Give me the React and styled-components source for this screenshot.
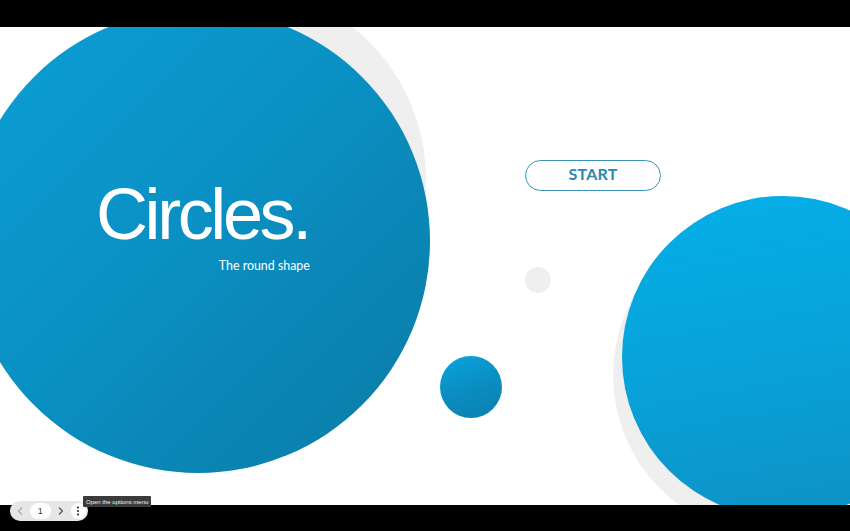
import styled, { createGlobalStyle } from "styled-components";

const GlobalStyle = createGlobalStyle`
    html, body {
        margin: 0;
        padding: 0;
        background: #000;
    }
    * {
        box-sizing: border-box;
    }
`;

const Stage = styled.div`
    width: 850px;
    height: 531px;
    display: flex;
    align-items: center;
    justify-content: center;
    background: #000;
    position: relative;
    overflow: hidden;
`;

const Slide = styled.div`
    position: relative;
    width: 850px;
    height: 478px;
    background: #fff;
    overflow: hidden;
`;

// shapes sit on the slide canvas, so their place is the content
const Circle = styled.div`
    position: absolute;
    left: ${({x, r}) => x - r}px;
    top: ${({y, r}) => y - r}px;
    width: ${({r}) => r * 2}px;
    height: ${({r}) => r * 2}px;
    border-radius: 50%;
    background: ${({fill}) => fill};
`;

const TitleBlock = styled.div`
    position: absolute;
    left: 96px;
    top: 151px;
    display: flex;
    flex-direction: column;
    align-items: flex-end;
    color: #fff;
`;

const Title = styled.h1`
    margin: 0;
    font-family: "Liberation Sans", Arial, sans-serif;
    font-weight: 400;
    font-size: 72px;
    line-height: 72px;
    letter-spacing: -3.4px;
`;

const Subtitle = styled.p`
    margin: 8px -1px 0 0;
    font-family: Lato, "Open Sans", sans-serif;
    font-size: 12.4px;
    line-height: 16px;
`;

const StartButton = styled.button`
    position: absolute;
    left: 525px;
    top: 133px;
    width: 136px;
    height: 31px;
    border: 1px solid #3b93b9;
    border-radius: 16px;
    background: #fff;
    color: #2a87ad;
    font-family: Lato, "Open Sans", sans-serif;
    font-weight: 700;
    font-size: 16px;
    line-height: 16px;
    letter-spacing: 0.2px;
    padding: 0 0 2px;
    cursor: pointer;
`;

const Player = styled.div`
    position: absolute;
    left: 10px;
    top: 496px;
    display: flex;
    align-items: flex-start;
`;

const Controls = styled.div`
    margin-top: 5px;
    height: 20px;
    width: 78px;
    padding: 0 2px 0 4px;
    display: flex;
    align-items: center;
    gap: 4px;
    border-radius: 10px;
    background: #e6e6e6;
`;

const NavArrow = styled.span`
    width: 12px;
    display: flex;
    align-items: center;
    justify-content: center;
    color: ${({dim}) => dim ? '#a8a8a8' : '#555'};
`;

const PageNumber = styled.span`
    width: 22px;
    height: 16px;
    border-radius: 8px;
    background: #fff;
    display: flex;
    align-items: center;
    justify-content: center;
    font-family: "Liberation Sans", Arial, sans-serif;
    font-size: 9px;
    color: #333;
`;

const MenuButton = styled.span`
    width: 16px;
    height: 16px;
    border-radius: 50%;
    background: #fff;
    display: flex;
    align-items: center;
    justify-content: center;
    margin-left: auto;
`;

const Tooltip = styled.div`
    margin-left: -5px;
    height: 11px;
    padding: 0 3px;
    display: flex;
    align-items: center;
    background: #3b3b3b;
    color: #f2f2f2;
    font-family: "Liberation Sans", Arial, sans-serif;
    font-size: 6px;
    border-radius: 1px;
    white-space: nowrap;
`;

function Chevron({left}) {
    return (
        <svg width="6" height="8" viewBox="0 0 6 8">
            <path
                d={left ? "M4.5 1 L1.5 4 L4.5 7" : "M1.5 1 L4.5 4 L1.5 7"}
                fill="none"
                stroke="currentColor"
                strokeWidth="1.2"
                strokeLinecap="round"
                strokeLinejoin="round"
            />
        </svg>
    );
}

function Kebab() {
    return (
        <svg width="4" height="10" viewBox="0 0 4 10">
            <circle cx="2" cy="1.5" r="1.1" fill="#333"/>
            <circle cx="2" cy="5" r="1.1" fill="#333"/>
            <circle cx="2" cy="8.5" r="1.1" fill="#333"/>
        </svg>
    );
}

export default function App() {
    return (
        <>
            <GlobalStyle/>
            <Stage>
                <Slide>
                    <Circle x={232} y={152} r={194} fill="#efefef"/>
                    <Circle x={198} y={214} r={232}
                            fill="linear-gradient(135deg, #0aa0d6 0%, #0a8fc2 50%, #0b7aa4 100%)"/>
                    <Circle x={537.5} y={253} r={13} fill="#efefef"/>
                    <Circle x={471} y={360} r={31}
                            fill="linear-gradient(160deg, #0aa3dc 0%, #0a8cc0 55%, #0c7fac 100%)"/>
                    <Circle x={774} y={348} r={161} fill="#efefef"/>
                    <Circle x={783} y={330} r={161}
                            fill="linear-gradient(170deg, #05afe8 0%, #08a2d9 50%, #0e90c2 100%)"/>

                    <TitleBlock>
                        <Title>Circles.</Title>
                        <Subtitle>The round shape</Subtitle>
                    </TitleBlock>

                    <StartButton>START</StartButton>
                </Slide>

                <Player>
                    <Controls>
                        <NavArrow dim><Chevron left/></NavArrow>
                        <PageNumber>1</PageNumber>
                        <NavArrow><Chevron/></NavArrow>
                        <MenuButton><Kebab/></MenuButton>
                    </Controls>
                    <Tooltip>Open the options menu</Tooltip>
                </Player>
            </Stage>
        </>
    );
}
